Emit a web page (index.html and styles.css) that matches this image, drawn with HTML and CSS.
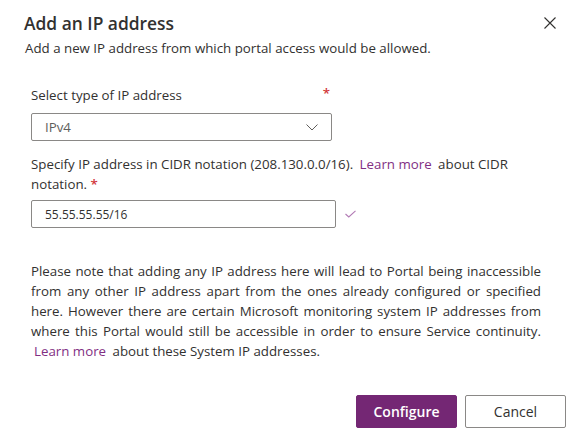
FILE: index.html
```html
<!DOCTYPE html>
<html>
<head>
<meta charset="utf-8">
<link rel="stylesheet" href="styles.css">
</head>
<body>
<div class="dialog">
  <div class="header">
    <h1 class="title">Add an IP address</h1>
    <button class="close" aria-label="Close">
      <svg width="12" height="12" viewBox="0 0 12 12"><path d="M0.5 0.5 L11.5 11.5 M11.5 0.5 L0.5 11.5" stroke="#323130" stroke-width="1.1" fill="none"/></svg>
    </button>
  </div>
  <p class="subtitle">Add a new IP address from which portal access would be allowed.</p>
  <div class="form">
    <div class="label-row">
      <span class="label">Select type of IP address</span>
      <span class="req">*</span>
    </div>
    <div class="select">
      <span>IPv4</span>
      <svg width="12" height="7" viewBox="0 0 12 7"><path d="M0.5 0.5 L6 6 L11.5 0.5" stroke="#605e5c" stroke-width="1" fill="none"/></svg>
    </div>
    <p class="cidr">Specify IP address in CIDR notation (208.130.0.0/16). <a class="link" href="#">Learn more</a> about CIDR notation. <span class="req">*</span></p>
    <div class="input-row">
      <div class="input">55.55.55.55/16</div>
      <svg class="check" width="11" height="8" viewBox="0 0 11 8"><path d="M0.5 4 L3.8 7 L10.5 0.8" stroke="#b27bb5" stroke-width="1.1" fill="none"/></svg>
    </div>
    <p class="note">Please note that adding any IP address here will lead to Portal being inaccessible from any other IP address apart from the ones already configured or specified here. However there are certain Microsoft monitoring system IP addresses from where this Portal would still be accessible in order to ensure Service continuity. <a class="link" href="#">Learn more</a> about these System IP addresses.</p>
  </div>
  <div class="footer">
    <button class="btn primary">Configure</button>
    <button class="btn secondary">Cancel</button>
  </div>
</div>
</body>
</html>
```
FILE: styles.css
```css
* { box-sizing: border-box; }
html, body { margin: 0; padding: 0; background: #fff; }
body {
  font-family: "Open Sans", "Noto Sans", sans-serif;
  color: #323130;
  font-size: 13.3px;
}
.dialog { width: 579px; height: 442px; }
.header {
  display: flex;
  justify-content: space-between;
  align-items: center;
  padding: 11px 23px 0 24px;
  height: 35px;
}
.title {
  margin: 0;
  font-size: 17.4px;
  font-weight: 600;
  line-height: 24px;
}
.close {
  border: 0;
  background: none;
  padding: 0;
  width: 12px;
  height: 12px;
  display: flex;
}
.subtitle {
  margin: 3px 0 0 25px;
  line-height: 20px;
}
.form { padding: 0 38px 0 31px; margin-top: 27px; }
.label-row {
  display: flex;
  justify-content: space-between;
  width: 299px;
  line-height: 20px;
}
.req { color: #d13438; font-weight: 600; }
.label-row .req { position: relative; top: -2px; }
.select {
  margin-top: 8px;
  width: 301px;
  height: 28px;
  border: 1px solid #8a8886;
  border-radius: 2px;
  display: flex;
  align-items: center;
  justify-content: space-between;
  padding: 0 13px 0 13px;
  color: #605e5c;
}
.cidr {
  margin: 13px 0 0 0;
  line-height: 20px;
  width: 510px;
}
.link { color: #822f83; text-decoration: none; padding: 0 3px; }
.input-row {
  display: flex;
  align-items: center;
  margin-top: 6px;
}
.input {
  width: 305px;
  height: 28px;
  border: 1px solid #8a8886;
  border-radius: 2px;
  display: flex;
  align-items: center;
  padding: 0 13px;
  font-size: 12px;
}
.check { margin-left: 9px; }
.note {
  margin: 33px 0 0 0;
  line-height: 20px;
  text-align: justify;
  width: 510px;
}
.footer {
  display: flex;
  justify-content: flex-end;
  gap: 8px;
  padding-right: 13px;
  margin-top: 34px;
}
.btn {
  width: 101px;
  height: 33px;
  border-radius: 2px;
  font-family: inherit;
  font-size: 14px;
  font-weight: 600;
  cursor: pointer;
}
.primary { background: #742774; color: #fff; border: 1px solid #742774; }
.secondary { background: #fff; color: #323130; border: 1px solid #8a8886; font-weight: 400; }
```
